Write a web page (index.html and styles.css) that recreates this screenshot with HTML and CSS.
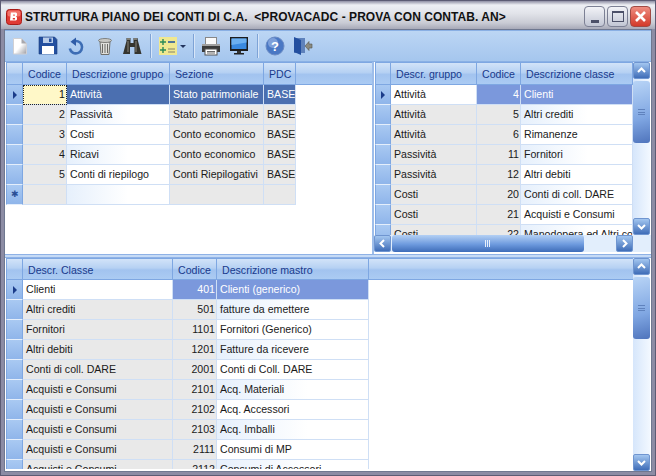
FILE: index.html
```html
<!DOCTYPE html>
<html lang="it">
<head>
<meta charset="utf-8">
<title>Struttura piano dei conti</title>
<link rel="stylesheet" href="styles.css">
</head>
<body>
<div class="window">
  <div class="titlebar">
    <svg class="app-icon" width="16" height="16" viewBox="0 0 16 16"><rect x="0.5" y="0.5" width="15" height="15" rx="3" fill="#e03a33" stroke="#a81c18"/><rect x="1.500" y="1.500" width="13" height="6" rx="2" fill="#f2736a"/><path d="M5 3.500h5l1 1v2l-1 1 1 1v2l-1 1H4l1-9zM7 5.500v1.300h2V5.500zM6.800 9v1.500H9V9z" fill="#fff" fill-rule="evenodd"/></svg>
    <div class="title">STRUTTURA PIANO DEI CONTI DI C.A. &nbsp;&lt;PROVACADC - PROVA CON CONTAB. AN&gt;</div>
    <div class="winbtns">
      <div class="winbtn"><span class="g-min"></span></div>
      <div class="winbtn"><span class="g-max"></span></div>
      <div class="winbtn close"><svg width="15" height="15" viewBox="0 0 15 15"><path d="M3 3l9 9M12 3l-9 9" stroke="#fff" stroke-width="2.600"/></svg></div>
    </div>
  </div>
  <div class="client">
    <div class="toolbar">
      <svg class="tb" width="20" height="20" viewBox="0 0 20 20"><defs><linearGradient id="docfill" x1="0" y1="0" x2="1" y2="1"><stop offset="0.500" stop-color="#ffffff"/><stop offset="1" stop-color="#9c9ca2"/></linearGradient></defs><path d="M3.500 2.500h8l5 5v10.500h-13z" fill="url(#docfill)" stroke="#d0d0d4"/><path d="M11.500 2.500v5h5z" fill="#a8a8ae"/></svg>
      <svg class="tb" width="20" height="20" viewBox="0 0 20 20"><path d="M1 1h15.500L19 3.500V18H1z" fill="#234f9f" stroke="#1b3c7c" stroke-width=".6"/><rect x="5" y="1.500" width="10" height="5.500" fill="#b8cce8"/><rect x="11" y="2.500" width="2.500" height="3.500" fill="#234f9f"/><rect x="4" y="10" width="12" height="8" fill="#ffffff"/></svg>
      <svg class="tb" width="20" height="20" viewBox="0 0 20 20"><path d="M7 5.700a6.200 6.200 0 1 1-3.200 6.800" fill="none" stroke="#3d6db5" stroke-width="2.600"/><path d="M10 1.500v8.500L4.500 5.700z" fill="#2f5ca8"/></svg>
      <svg class="tb" width="20" height="20" viewBox="0 0 20 20"><path d="M6 6h10l-1 12.500H7z" fill="#e0e0dc" stroke="#70706c"/><ellipse cx="11" cy="4.500" rx="6.500" ry="2" fill="#c8c8c4" stroke="#70706c" stroke-width=".8"/><path d="M8.500 8v9M11 8v9M13.500 8v9" fill="none" stroke="#6a6a66"/></svg>
      <svg class="tb" width="20" height="20" viewBox="0 0 20 20"><path d="M4.500 2h4v5h3V2h4l.5 3 3.500 13h-7v-7H8v7H1L4.500 5z" fill="#35352f"/><path d="M6 5v11M14 5v11" stroke="#7c7870" stroke-width="1.200"/><path d="M5 3h3M12 3h3" stroke="#c8c4b8"/></svg>
      <div class="sep"></div>
      <div class="tb-active"><svg width="16" height="16" viewBox="0 0 16 16"><path d="M0 4h6M3 1v6M0 12h6M3 9v6" stroke="#2b8a58" stroke-width="1.400"/><path d="M8 4h7" stroke="#2a5a9c" stroke-width="1.600"/><path d="M8 11h7M8 14h7" stroke="#a8a478" stroke-width="1.600"/></svg></div>
      <span class="caret"></span>
      <div class="sep"></div>
      <svg class="tb" width="20" height="20" viewBox="0 0 20 20"><rect x="4.500" y="1.500" width="11" height="7" fill="#fafafa" stroke="#888"/><path d="M1 8h18v8H1z" fill="#3a3a3a"/><path d="M1 8h18v2H1z" fill="#a0a0a0"/><rect x="4" y="13" width="12" height="6" fill="#fff" stroke="#555"/><path d="M6 15.500h8M6 17h8" stroke="#444" stroke-width=".8"/></svg>
      <svg class="tb" width="20" height="20" viewBox="0 0 20 20"><rect x="1" y="1" width="18" height="14" fill="#1c1c1c"/><rect x="2.500" y="2.500" width="15" height="10.500" fill="#3a8ae0"/><path d="M2.500 2.500h15v4L2.500 9z" fill="#6cb0f0"/><rect x="8" y="15" width="4" height="2" fill="#333"/><rect x="5" y="17" width="10" height="1.500" fill="#222"/></svg>
      <div class="sep"></div>
      <svg class="tb" width="20" height="20" viewBox="0 0 20 20"><circle cx="10" cy="10" r="9" fill="#4a78c4" stroke="#6c8cc4"/><circle cx="8" cy="7" r="5" fill="#7ea0da"/><text class="help-q" x="10" y="15" text-anchor="middle">?</text></svg>
      <svg class="tb" width="20" height="20" viewBox="0 0 20 20"><path d="M1 2h11v15H1z" fill="#5e82bc"/><path d="M1 1l7 3v15l-7-3z" fill="#234f9f"/><path d="M19 8h-3V5.500L12 10l4 4.500V12h3z" fill="#8a8a80" stroke="#55554e" stroke-width=".6"/></svg>
    </div>

    <div class="top">
      <div class="pane pane-left">
        <div class="grid cols-a">
          <div class="row head"><div class="ind"></div><div class="h">Codice</div><div class="h">Descrizione gruppo</div><div class="h">Sezione</div><div class="h">PDC</div><div class="h fill"></div></div>
          <div class="row"><div class="ind cur"></div><div class="c num focus">1</div><div class="c sel">Attività</div><div class="c sel">Stato patrimoniale</div><div class="c sel">BASE</div></div>
          <div class="row"><div class="ind"></div><div class="c num g">2</div><div class="c">Passività</div><div class="c g">Stato patrimoniale</div><div class="c g">BASE</div></div>
          <div class="row"><div class="ind"></div><div class="c num g">3</div><div class="c">Costi</div><div class="c g">Conto economico</div><div class="c g">BASE</div></div>
          <div class="row"><div class="ind"></div><div class="c num g">4</div><div class="c">Ricavi</div><div class="c g">Conto economico</div><div class="c g">BASE</div></div>
          <div class="row"><div class="ind"></div><div class="c num g">5</div><div class="c">Conti di riepilogo</div><div class="c g">Conti Riepilogativi</div><div class="c g">BASE</div></div>
          <div class="row"><div class="ind new">✱</div><div class="c g"></div><div class="c"></div><div class="c g"></div><div class="c g"></div></div>
        </div>
      </div>
      <div class="vsplit"></div>
      <div class="pane pane-right">
        <div class="pane-upper">
          <div class="grid cols-b clip">
            <div class="row head"><div class="ind"></div><div class="h">Descr. gruppo</div><div class="h">Codice</div><div class="h">Descrizione classe</div></div>
            <div class="row"><div class="ind cur"></div><div class="c">Attività</div><div class="c num sel2">4</div><div class="c sel2">Clienti</div></div>
            <div class="row"><div class="ind"></div><div class="c g">Attività</div><div class="c num g">5</div><div class="c">Altri crediti</div></div>
            <div class="row"><div class="ind"></div><div class="c g">Attività</div><div class="c num g">6</div><div class="c">Rimanenze</div></div>
            <div class="row"><div class="ind"></div><div class="c g">Passività</div><div class="c num g">11</div><div class="c">Fornitori</div></div>
            <div class="row"><div class="ind"></div><div class="c g">Passività</div><div class="c num g">12</div><div class="c">Altri debiti</div></div>
            <div class="row"><div class="ind"></div><div class="c g">Costi</div><div class="c num g">20</div><div class="c">Conti di coll. DARE</div></div>
            <div class="row"><div class="ind"></div><div class="c g">Costi</div><div class="c num g">21</div><div class="c">Acquisti e Consumi</div></div>
            <div class="row"><div class="ind"></div><div class="c g">Costi</div><div class="c num g">22</div><div class="c">Manodopera ed Altri costi</div></div>
          </div>
          <div class="vbar">
            <div class="sbtn"><svg width="9" height="9" viewBox="0 0 9 9"><path d="M1 6l3.500-3.500L8 6" class="chev"/></svg></div>
            <div class="vthumb"><span class="grip-h"></span></div>
            <div class="sbtn"><svg width="9" height="9" viewBox="0 0 9 9"><path d="M1 3l3.500 3.500L8 3" class="chev"/></svg></div>
          </div>
        </div>
        <div class="hbar">
          <div class="sbtn"><svg width="9" height="9" viewBox="0 0 9 9"><path d="M6 1L2.500 4.500 6 8" class="chev"/></svg></div>
          <div class="hthumb"><span class="grip-v"></span></div>
          <div class="sbtn"><svg width="9" height="9" viewBox="0 0 9 9"><path d="M3 1l3.500 3.500L3 8" class="chev"/></svg></div>
        </div>
      </div>
    </div>
    <div class="hsplit"></div>
    <div class="pane pane-bottom">
      <div class="grid cols-c clip">
        <div class="row head"><div class="ind"></div><div class="h">Descr. Classe</div><div class="h">Codice</div><div class="h">Descrizione mastro</div><div class="h fill"></div></div>
        <div class="row"><div class="ind cur"></div><div class="c">Clienti</div><div class="c num sel2">401</div><div class="c sel2">Clienti (generico)</div></div>
        <div class="row"><div class="ind"></div><div class="c g">Altri crediti</div><div class="c num g">501</div><div class="c">fatture da emettere</div></div>
        <div class="row"><div class="ind"></div><div class="c g">Fornitori</div><div class="c num g">1101</div><div class="c">Fornitori (Generico)</div></div>
        <div class="row"><div class="ind"></div><div class="c g">Altri debiti</div><div class="c num g">1201</div><div class="c">Fatture da ricevere</div></div>
        <div class="row"><div class="ind"></div><div class="c g">Conti di coll. DARE</div><div class="c num g">2001</div><div class="c">Conti di Coll. DARE</div></div>
        <div class="row"><div class="ind"></div><div class="c g">Acquisti e Consumi</div><div class="c num g">2101</div><div class="c">Acq. Materiali</div></div>
        <div class="row"><div class="ind"></div><div class="c g">Acquisti e Consumi</div><div class="c num g">2102</div><div class="c">Acq. Accessori</div></div>
        <div class="row"><div class="ind"></div><div class="c g">Acquisti e Consumi</div><div class="c num g">2103</div><div class="c">Acq. Imballi</div></div>
        <div class="row"><div class="ind"></div><div class="c g">Acquisti e Consumi</div><div class="c num g">2111</div><div class="c">Consumi di MP</div></div>
        <div class="row"><div class="ind"></div><div class="c g">Acquisti e Consumi</div><div class="c num g">2112</div><div class="c">Consumi di Accessori</div></div>
      </div>
      <div class="vbar">
        <div class="sbtn"><svg width="9" height="9" viewBox="0 0 9 9"><path d="M1 6l3.500-3.500L8 6" class="chev"/></svg></div>
        <div class="vthumb"><span class="grip-h"></span></div>
        <div class="sbtn"><svg width="9" height="9" viewBox="0 0 9 9"><path d="M1 3l3.500 3.500L8 3" class="chev"/></svg></div>
      </div>
    </div>
  </div>
</div>
</body>
</html>
```
FILE: styles.css
```css
* { box-sizing: border-box; }
html, body { margin: 0; padding: 0; background: #fff; }
body { width: 656px; height: 476px; overflow: hidden; font-family: "Liberation Sans", sans-serif; }
.window { width: 656px; height: 476px; display: flex; flex-direction: column; background: #8c8ca4; border: 1px solid #5c5c74; }
.titlebar { height: 28px; flex: none; display: flex; align-items: center; padding: 3px 4px 0 5px; background: linear-gradient(#8f8fa4 0, #eef0f4 4px, #e2e4ea 12px, #c9cbd4 22px, #a8aab8 28px); }
.app-icon { flex: none; margin-right: 3px; }
.title { flex: 1; font-weight: bold; font-size: 12px; letter-spacing: 0.05px; white-space: nowrap; color: #111; }
.winbtns { display: flex; gap: 2px; }
.winbtn { width: 21px; height: 21px; border: 1px solid #7c8094; border-radius: 4px; background: linear-gradient(#f2f3f7, #c2c6d4); display: flex; align-items: center; justify-content: center; }
.winbtn.close { background: linear-gradient(#ee8d80, #d33a2a); border-color: #a04a44; }
.g-min { width: 8px; height: 3px; background: #4c5068; margin-top: 9px; }
.g-max { width: 12px; height: 11px; border: 1px solid #4c5068; border-top-width: 2px; }
.client { flex: 1; min-height: 0; margin: 0 3px 3px; background: #fff; border: 1px solid #6f7890; display: flex; flex-direction: column; }
.toolbar { height: 32px; flex: none; display: flex; align-items: center; padding-left: 5px; gap: 8px; background: linear-gradient(#bcd6f4, #a5c6ee); border-top: 1px solid #8ab0e4; border-bottom: 1px solid #8ab0e4; }
.tb { flex: none; }
.sep { height: 24px; width: 2px; flex: none; margin-right: -2px; background: #7ea3d6; border-right: 1px solid #d8e6f8; }
.tb-active { width: 18px; height: 18px; margin: 0 1px; flex: none; background: #f0e890; display: flex; align-items: center; justify-content: center; }
.caret { width: 6px; flex: none; height: 0; border: 3px solid transparent; border-top: 3px solid #22345e; border-bottom: 0; margin: 0 -1px 0 -6px; }
.help-q { font: bold 13px "Liberation Sans", sans-serif; fill: #fff; }
.top { height: 192px; flex: none; display: flex; }
.pane { background: #fff; display: flex; min-width: 0; }
.pane-left { width: 367px; flex: none; padding: 0 0 0 1px; }
.vsplit { width: 2px; flex: none; background: #9dbdea; }
.pane-right { flex: 1; flex-direction: column; }
.pane-upper { height: 173px; flex: none; display: flex; }
.pane-upper .grid { width: 258px; flex: none; margin-left: 1px; }
.hsplit { height: 4px; flex: none; background: #c6dbf6; border-top: 1px solid #8fb2e6; border-bottom: 1px solid #8fb2e6; }
.pane-bottom { flex: 1; min-height: 0; padding-left: 1px; }
.grid { font-size: 10.6px; color: #111; }
.clip { min-height: 0; overflow: hidden; }
.pane-bottom .grid { width: 627px; flex: none; margin-bottom: 2px; }
.row { display: grid; height: 20px; }
.row.head { height: 23px; }
.pane-bottom .row.head { height: 22px; }
.cols-a .row { grid-template-columns: 17px 44px 103px 94px 32px; }
.cols-a .row.head { grid-template-columns: 17px 44px 103px 94px 32px 76px; }
.cols-b .row { grid-template-columns: 16px 86px 44px 112px; }
.cols-c .row { grid-template-columns: 17px 150px 44px 152px; }
.cols-c .row.head { grid-template-columns: 17px 150px 44px 152px 264px; }
.ind { background: linear-gradient(#a9c9f2, #8fb5ea); border-right: 1px solid #7ea7e2; border-bottom: 1px solid #e4eefb; border-left: 1px solid #7ea7e2; display: flex; align-items: center; justify-content: center; font-size: 9px; color: #2a4f96; line-height: 1; }
.ind.cur::after { content: ""; border-left: 4px solid #1b3c8a; border-top: 4px solid transparent; border-bottom: 4px solid transparent; }
.h { background: linear-gradient(#d2e3f8 0, #b6d1f3 45%, #a2c3ef 55%, #abcbf3 100%); border-right: 1px solid #7ea7e2; border-bottom: 1px solid #7ea7e2; border-top: 1px solid #7ea7e2; color: #183a8c; padding: 1px 0 0 5px; display: flex; align-items: center; white-space: nowrap; }
.head .ind { background: linear-gradient(#d2e3f8 0, #b6d1f3 45%, #a2c3ef 55%, #abcbf3 100%); border-bottom-color: #7ea7e2; border-top: 1px solid #7ea7e2; }
.h.fill { border-right: 0; }
.c { background: #fff; border-right: 1px solid #cfdff5; border-bottom: 1px solid #cfdff5; padding: 0 3px 1px; display: flex; align-items: center; white-space: nowrap; overflow: hidden; color: #1a1a1a; }
.row:nth-child(odd) .c { background: linear-gradient(90deg, #e6f0fc, #fff 60%); }
.row:nth-child(odd) .c.g, .c.g { background: #e9e9e9; }
.c.num { justify-content: flex-end; padding-right: 1px; }
.c.sel { background: #4b6fb0; color: #fff; }
.c.sel2 { background: #7b98dc; color: #fff; }
.c.focus { background: #fff8c8; outline: 1px dotted #222; outline-offset: -1px; color: #111; }
.hbar { height: 17px; flex: none; display: flex; background: #e2eefc; }
.sbtn { width: 17px; height: 17px; flex: none; border-radius: 2px; background: linear-gradient(#a3c6f0, #3f6db8); border: 1px solid #6f95d0; display: flex; align-items: center; justify-content: center; }
.chev { fill: none; stroke: #fff; stroke-width: 2; }
.hthumb { width: 192px; flex: none; margin: 0 32px 0 1px; border-radius: 3px; background: linear-gradient(#b4d0f4, #6d9ade 55%, #3e6cb8); display: flex; align-items: center; justify-content: center; }
.vbar { width: 17px; flex: none; display: flex; flex-direction: column; background: linear-gradient(90deg, #d6e6fb, #f2f8ff); }
.vthumb { width: 17px; height: 62px; border-radius: 3px; margin: 2px 0 auto; background: linear-gradient(165deg, #b8d4f6, #7fa6e2 60%, #4f74bc); display: flex; align-items: center; justify-content: center; flex: none; }
.grip-h { width: 7px; height: 6px; border-top: 1px solid #5f82bd; border-bottom: 1px solid #5f82bd; background: linear-gradient(#5f82bd, #5f82bd) center / 100% 1px no-repeat; }
.grip-v { width: 6px; height: 7px; background: repeating-linear-gradient(90deg, #e8f0fb 0 1px, transparent 1px 2px); }
```
